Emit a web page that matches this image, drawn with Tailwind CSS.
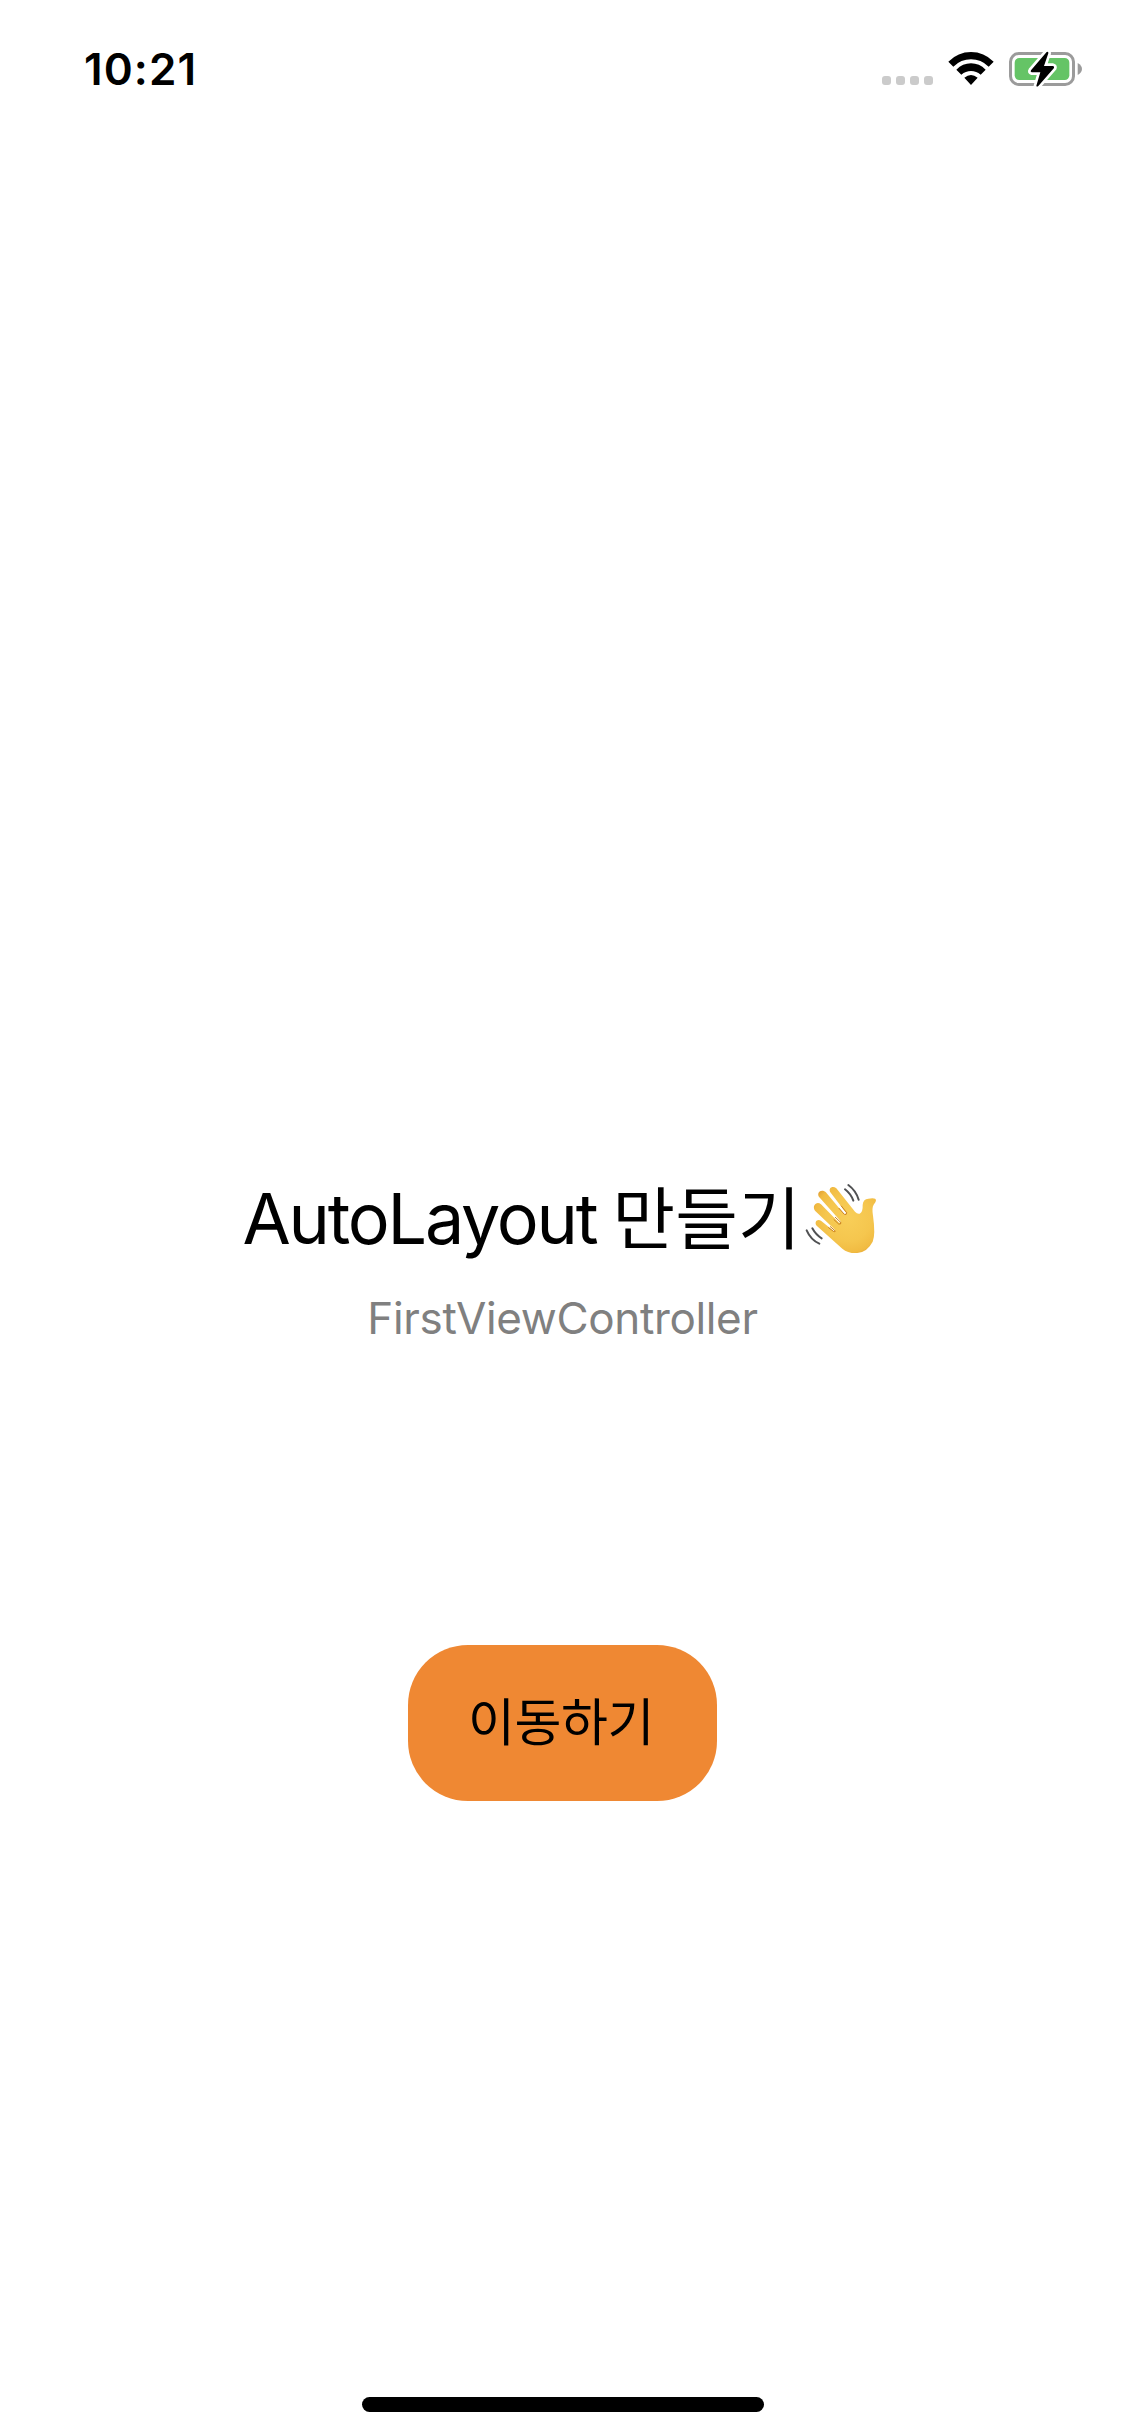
<!DOCTYPE html>
<html lang="ko">
<head>
<meta charset="utf-8">
<title>AutoLayout</title>
<script src="https://cdn.jsdelivr.net/npm/@tailwindcss/browser@4"></script>
</head>
<body class="bg-white">
<div class="w-[1125px] h-[2436px] flex flex-col items-center overflow-hidden bg-white text-black font-['Inter','Noto_Sans_CJK_KR',sans-serif]">
  <header class="w-full h-[132px] flex justify-between pl-[84px] pr-[35px] pt-[40px] shrink-0">
    <span class="mt-[2px] h-[54px] leading-[54px] text-[44px] tracking-[1.1px] font-semibold whitespace-nowrap">10:21</span>
    <svg class="w-[220px] h-[60px]" viewBox="0 0 660 180">
      <g fill="#cbcbcb"><rect x="36" y="108" width="27" height="27" rx="9"/><rect x="78" y="108" width="27" height="27" rx="9"/><rect x="120" y="108" width="27" height="27" rx="9"/><rect x="162" y="108" width="27" height="27" rx="9"/></g>
      <path d="M235 65Q264 36 303 36Q342 36 371 65L356 80Q333 58 303 58Q273 58 250 80ZM259 89Q278 70 303 70Q328 70 347 89L332 104Q319 93 303 93Q287 93 274 104ZM283 113Q303 97 323 113L303 135Z"/>
      <rect x="421.500" y="40.500" width="189" height="93" rx="25" fill="none" stroke="#9b9b9b" stroke-width="9"/>
      <rect x="434" y="54" width="164" height="66" rx="14" fill="#65c466"/>
      <path d="M623 69Q636 76 636 87Q636 98 623 105Z" fill="#9b9b9b"/>
      <path d="M530 36L483 91Q480 96 485 97H511L499 137Q500 142 505 138L552 84Q554 79 549 78H522L535 40Q536 34 530 36Z" stroke="#fff" stroke-width="16" stroke-linejoin="round" paint-order="stroke"/>
    </svg>
  </header>
  <main class="w-full flex flex-col items-center pt-[1043px]">
    <h1 class="w-[650px] h-[85px] flex whitespace-nowrap leading-[87px] text-[70px]">
      <span class="ml-[5px] w-[370px] tracking-[-2.2px]">AutoLayout</span>
      <span class="w-[182px] text-[68px] leading-[80px] tracking-[0.200px] font-['Noto_Sans_CJK_KR',sans-serif] font-normal">만들기</span>
      <svg class="w-[90px] h-[85px] shrink-0" viewBox="0 0 270 255" role="img" aria-label="👋">
        <defs>
          <radialGradient id="skin" gradientUnits="userSpaceOnUse" cx="160" cy="130" r="125"><stop offset="0" stop-color="#f8ce58"/><stop offset=".55" stop-color="#f5c64e"/><stop offset=".82" stop-color="#f1bb42"/><stop offset="1" stop-color="#dc9830"/></radialGradient>
        </defs>
        <path d="M106 52C99 39 113 31 124 40L180 110Q187 118 194 116Q204 111 203 90Q204 72 220 71Q243 67 243 76Q243 82 236 89Q230 98 234 122Q242 178 233 200Q217 231 187 234Q160 236 142 221L65 152C57 142 66 130 78 137L117 169L120 164L60 107C50 93 65 77 78 88L133 144L137 139L73 67C63 53 78 40 92 51L149 119L154 115Z" fill="url(#skin)"/>
        <g fill="none" stroke="#c98022" stroke-width="3" stroke-linecap="round" stroke-linejoin="round"><path d="M139 93L155 113Q155 121 148 118L132 100"/><path d="M121 127L138 143Q138 149 131 147L117 134"/><path d="M106 155L121 168Q120 172 115 169L101 158"/></g>
        <g fill="none" stroke="#505153" stroke-width="6" stroke-linecap="round"><path d="M160 30Q183 47 191 74"/><path d="M150 43Q168 57 175 77"/><path d="M52 160Q63 180 80 190"/><path d="M35 166Q47 194 73 206"/></g>
      </svg>
    </h1>
    <p class="mt-[31px] h-[54px] leading-[54px] text-[44px] tracking-[-0.350px] text-[#808080] whitespace-nowrap">FirstViewController</p>
    <button class="mt-[300px] w-[309px] h-[156px] pb-[8px] pr-[3px] rounded-[60px] bg-[#ef8833] text-[51px] leading-[60px] tracking-[-0.400px] font-normal font-['Noto_Sans_CJK_KR',sans-serif] whitespace-nowrap">이동하기</button>
  </main>
  <div class="mt-auto mb-[24px] w-[402px] h-[15px] rounded-full bg-black shrink-0"></div>
</div>
</body>
</html>
